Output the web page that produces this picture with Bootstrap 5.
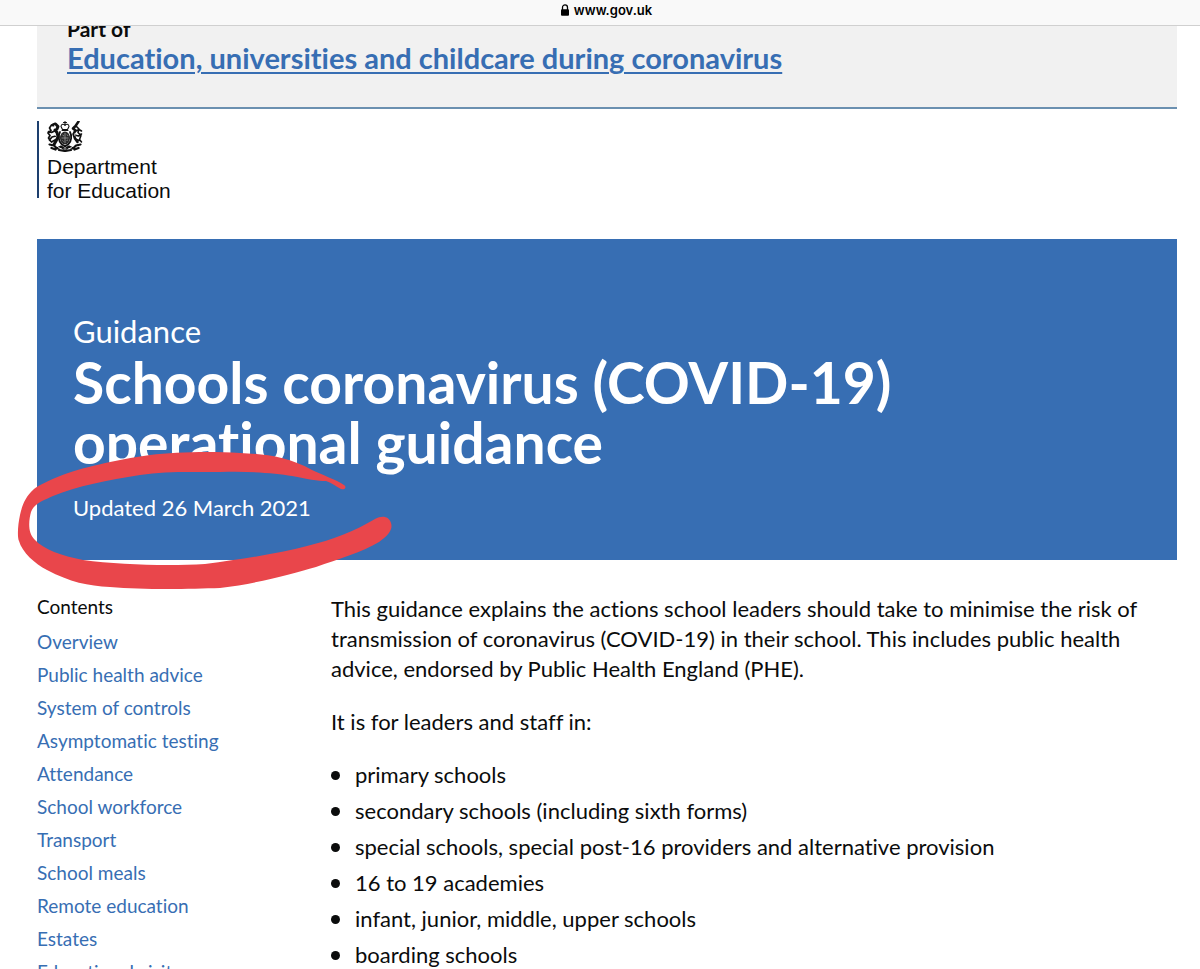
<!DOCTYPE html>
<html lang="en">
<head>
<meta charset="utf-8">
<meta name="viewport" content="width=device-width, initial-scale=1">
<title>Schools coronavirus (COVID-19) operational guidance</title>
<link href="https://cdn.jsdelivr.net/npm/bootstrap@5.3.0/dist/css/bootstrap.min.css" rel="stylesheet">
<style>
  body { font-family: Lato, "Noto Sans", sans-serif; font-variant-ligatures: none; font-size: 22px; line-height: 30px; color: #0b0c0c; background: #fff; }
  a { color: #376eb3; }
  .address-bar { height: 26px; padding-left: 12px; font: 600 13px/20px Inter, sans-serif; color: #000; background: #f9f9f9; border-bottom: 1px solid #d0d0d0; }
  .page-body { padding: 0 23px 0 37px; }
  .part-of { margin-top: -12px; padding: 0 30px 31px; background: #f1f1f1; border-bottom: 2px solid #6b90b0; }
  .part-of-label { font-size: 21px; line-height: 29px; }
  .part-of-link { font-size: 29px; text-decoration-thickness: 2px; text-underline-offset: 3px; }
  .dept { margin: 12px 0 41px; height: 77px; padding-left: 8px; border-left: 2px solid #1d3f6e; font: 21px/24px "Liberation Sans", sans-serif; }
  .crest { width: 36px; height: 31px; margin-bottom: 3px; }
  .title-banner { padding: 75px 36px 37px; background: #376eb3; }
  .title-banner h1 { margin-bottom: 21px; font-size: 57px; line-height: 60px; max-width: 900px; }
  .doc-type { font-size: 31px; line-height: 34px; }
  .pen-ring { left: -20px; bottom: -30px; width: 376px; height: 140px; }
  .page-columns { padding-top: 30px; }
  .contents { flex: 0 0 294px; font-size: 19px; line-height: 33px; }
  .contents-heading { margin-bottom: 2px; }
  .article { max-width: 840px; padding-top: 4px; }
  .article p { margin-bottom: 23px; }
  .article li { margin-bottom: 6px; gap: 15px; }
  .article li::before { content: ""; flex: none; width: 9px; height: 9px; border-radius: 50%; background: currentColor; }
</style>
</head>
<body class="vh-100 overflow-hidden d-flex flex-column">
<header class="address-bar sticky-top flex-shrink-0 d-flex justify-content-center gap-1">
  <svg class="mt-1" width="10" height="12" viewBox="0 0 10 12" aria-hidden="true"><path d="M2.5 6V3.4a2.5 2.5 0 0 1 5 0V6" fill="none" stroke="#000" stroke-width="1.3"/><rect x="1" y="5.3" width="8" height="6.4" rx="1"/></svg>
  <span>www.gov.uk</span>
</header>

<main class="page-body flex-grow-1">
  <section class="part-of">
    <div class="part-of-label fw-bold">Part of</div>
    <a class="part-of-link fw-bold" href="#">Education, universities and childcare during coronavirus</a>
  </section>

  <div class="dept">
    <svg class="crest d-block" viewBox="0 0 72 62" role="img" aria-label="Royal coat of arms">
      <g fill="none" stroke="#111" stroke-linecap="round" stroke-linejoin="round">
        <path d="M12 8l5-2 5 5-2 5-4 2 4 5 2 9-4 8-4 7" stroke-width="6"/>
        <path d="M9 8l-4 6 3 5-6 5 4 5-3 5 4 6M17 19l-8 4-6-2M18 30l-8 2-5 6M16 38l-7 4" stroke-width="3.4"/>
        <path d="M63 1l-6 9M56 11l-4 4 5 4-4 7 3 9 5 7" stroke-width="5"/>
        <path d="M59 11l5 5-2 7 6 6-3 8 4 5M55 21l9-4 5 3M55 28l8 2 6-4M57 36l7 3" stroke-width="3.2"/>
        <path d="M26 22c-4 7-3 19 3 24l7 5 7-5c6-5 7-17 3-24" stroke-width="3.6"/>
        <path d="M5 47l9 2 6 6 8-4 8 6 8-6 8 4 6-6 9-2M9 54l8 3M63 54l-8 3M24 58l12 2 12-2" stroke-width="4.4"/>
        <path d="M28 11c0-5 6-6 8-2 2-4 8-3 8 2l-3 6H31zM36 1v7M33 3h6M30 19h12" stroke-width="2.2"/>
      </g>
      <ellipse cx="36" cy="34" rx="10" ry="13" fill="#2a2a2a"/>
      <path d="M36 24v20M29 34h14M31 28l3 2M40 27l2 3M31 39l2 2M39 39l3-1" fill="none" stroke="#aaa" stroke-width="1.4"/>
      <path d="M14 9l3 1M16 28l3 2M55 25l1 5M22 53l4 1M46 54l4-1M33 56l6 0" stroke="#fff" stroke-width="1.5"/>
    </svg>
    <div>Department<br>for Education</div>
  </div>

  <section class="title-banner position-relative text-white">
    <div class="doc-type">Guidance</div>
    <h1 class="fw-bold mt-1">Schools coronavirus (COVID-19) operational guidance</h1>
    <div>Updated 26 March 2021</div>
    <svg class="pen-ring position-absolute" viewBox="17 450 376 140" aria-hidden="true">
      <path fill="#e9464b" d="M344 485C335 479 322 475 312 470C287 456 263 454 240 453C210 451 175 452 150 455C115 460 80 468 60 476C48 481 39 485 34 489C25 497 22 506 20 515C18 524 17 537 19 541C22 552 35 564 47 570C70 582 88 586 110 587C145 590 190 589 220 588C260 583 292 574 316 567C338 559 363 552 379 542C389 535 393 529 391 523C389 516 382 515 375 519C355 531 332 540 307 546C280 553 245 559 205 564C170 566 120 565 83 560C62 556 43 549 35 540C27 532 29 520 31 512C34 503 45 500 53 496C77 486 108 480 140 475C165 471 190 472 220 472C250 471 275 473 292 476C307 479 318 481 326 481C332 483 337 487 341 489C345 490 347 487 344 485Z"/>
    </svg>
  </section>

  <div class="page-columns d-flex">
    <nav class="contents" aria-label="Contents">
      <div class="contents-heading">Contents</div>
      <ul class="list-unstyled">
        <li><a class="text-decoration-none" href="#">Overview</a></li>
        <li><a class="text-decoration-none" href="#">Public health advice</a></li>
        <li><a class="text-decoration-none" href="#">System of controls</a></li>
        <li><a class="text-decoration-none" href="#">Asymptomatic testing</a></li>
        <li><a class="text-decoration-none" href="#">Attendance</a></li>
        <li><a class="text-decoration-none" href="#">School workforce</a></li>
        <li><a class="text-decoration-none" href="#">Transport</a></li>
        <li><a class="text-decoration-none" href="#">School meals</a></li>
        <li><a class="text-decoration-none" href="#">Remote education</a></li>
        <li><a class="text-decoration-none" href="#">Estates</a></li>
        <li><a class="text-decoration-none" href="#">Educational visits</a></li>
      </ul>
    </nav>
    <article class="article">
      <p>This guidance explains the actions school leaders should take to minimise the risk of transmission of coronavirus (COVID-19) in their school. This includes public health advice, endorsed by Public Health England (PHE).</p>
      <p>It is for leaders and staff in:</p>
      <ul class="list-unstyled">
        <li class="d-flex align-items-center">primary schools</li>
        <li class="d-flex align-items-center">secondary schools (including sixth forms)</li>
        <li class="d-flex align-items-center">special schools, special post-16 providers and alternative provision</li>
        <li class="d-flex align-items-center">16 to 19 academies</li>
        <li class="d-flex align-items-center">infant, junior, middle, upper schools</li>
        <li class="d-flex align-items-center">boarding schools</li>
      </ul>
    </article>
  </div>
</main>
<script src="https://cdn.jsdelivr.net/npm/bootstrap@5.3.0/dist/js/bootstrap.bundle.min.js"></script>
</body>
</html>
